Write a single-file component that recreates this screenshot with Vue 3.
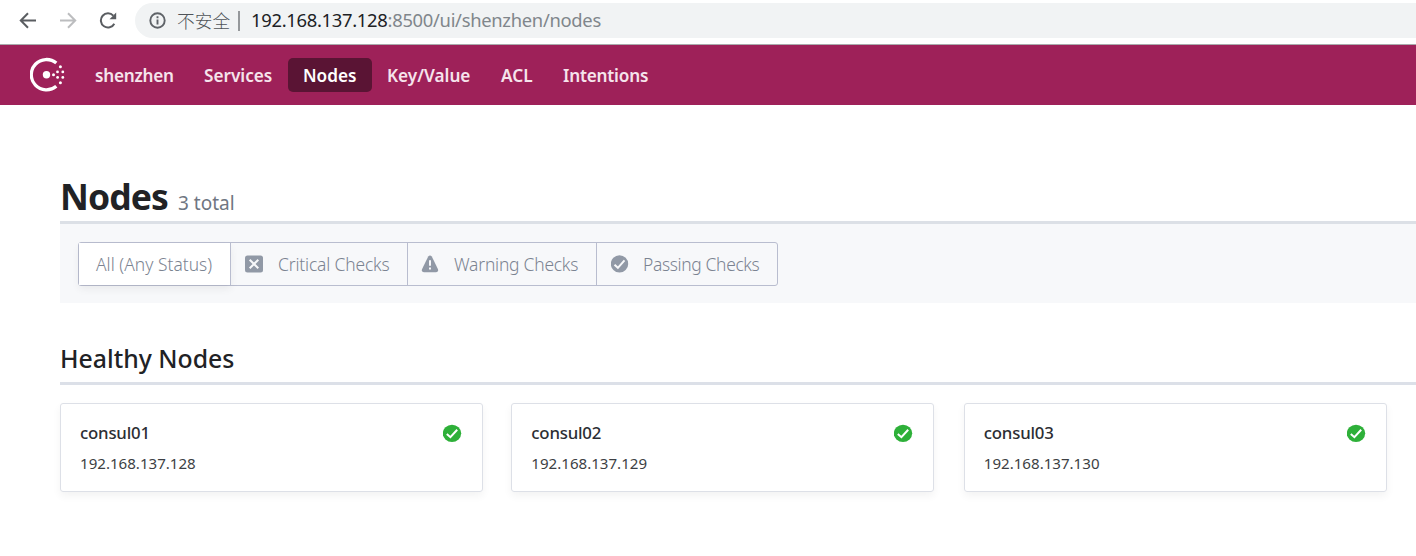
<script setup>
const tabs = [
  { label: 'shenzhen', key: 'dc' },
  { label: 'Services', key: 'services' },
  { label: 'Nodes', key: 'nodes' },
  { label: 'Key/Value', key: 'kv' },
  { label: 'ACL', key: 'acl' },
  { label: 'Intentions', key: 'intentions' },
]
const nodes = [
  { name: 'consul01', address: '192.168.137.128' },
  { name: 'consul02', address: '192.168.137.129' },
  { name: 'consul03', address: '192.168.137.130' },
]
</script>

<template>
  <div class="window">
    <div class="toolbar">
      <svg class="tool back" width="18" height="18" viewBox="0 0 18 18"><path d="M17 9.5H2.5M9 2.3 1.8 9.5 9 16.7" /></svg>
      <svg class="tool forward" width="18" height="18" viewBox="0 0 18 18"><path d="M1 9.5h14.5M9 2.3 16.2 9.5 9 16.7" /></svg>
      <svg class="tool reload" width="19" height="18" viewBox="0 0 19 18"><path d="M15.3 12.7A7.1 7.1 0 1 1 14.3 4.7" /><path class="solid" d="M17.2 1.5v6.7h-6.7z" /></svg>
      <div class="omnibox">
        <svg class="info" width="17" height="17" viewBox="0 0 17 17"><circle cx="8.5" cy="8.5" r="7.2" /><path d="M8.5 7.4v5M8.5 4.3v2" /></svg>
        <span class="insecure">不安全</span>
        <span class="divider"></span>
        <span class="url"><b>192.168.137.128</b><span>:8500/ui/shenzhen/nodes</span></span>
      </div>
    </div>
    <nav class="nav">
      <svg class="logo" width="36" height="36" viewBox="0 0 36 36">
        <path d="M26.3 6.1A15.2 15.2 0 1 0 26.3 29.3" />
        <circle cx="16.5" cy="17.7" r="3.7" />
        <circle cx="23.5" cy="17.7" r="1.5" />
        <circle cx="27.5" cy="14.9" r="1.4" /><circle cx="27.6" cy="20.4" r="1.4" />
        <circle cx="32.8" cy="14.9" r="1.4" /><circle cx="32.8" cy="20.4" r="1.4" />
        <circle cx="30.4" cy="9.7" r="1.5" /><circle cx="30.4" cy="25.7" r="1.5" />
      </svg>
      <a v-for="t in tabs" :key="t.key" class="tab" :class="[t.key, { active: t.key === 'nodes' }]">{{ t.label }}</a>
    </nav>
    <main>
      <header class="title"><h1>Nodes</h1><em>3 total</em></header>
      <div class="filter">
        <div class="group">
          <div class="option all"><span>All (Any Status)</span></div>
          <div class="option critical">
            <svg width="18" height="18" viewBox="0 0 18 18"><rect class="fill" y=".5" width="18" height="17" rx="2.5" /><path d="m4.7 4.7 8.6 8.6m0-8.6-8.6 8.6" /></svg>
            <span>Critical Checks</span>
          </div>
          <div class="option warning">
            <svg width="18" height="18" viewBox="0 0 18 18"><path class="fill" d="M7.2 1.5Q9-.6 10.8 1.5L17 14.2Q17.6 17.2 15 17.2H3Q.3 17.2 1 14.2z" /><path d="M9 5.2v5.6M9 12.4v2" /></svg>
            <span>Warning Checks</span>
          </div>
          <div class="option passing">
            <svg width="18" height="18" viewBox="0 0 18 18"><circle class="fill" cx="8.5" cy="8.9" r="8.7" /><path d="m3.5 9.7 3.4 3.1L13.5 5.4" /></svg>
            <span>Passing Checks</span>
          </div>
        </div>
      </div>
      <h2>Healthy Nodes</h2>
      <div class="cards">
        <article v-for="n in nodes" :key="n.name" class="card">
          <div class="row">
            <strong>{{ n.name }}</strong>
            <svg width="19" height="18" viewBox="0 0 19 18"><ellipse cx="9" cy="9.3" rx="9.2" ry="8.6" /><path d="m3.8 10 3.6 3.2 6.8-7.4" /></svg>
          </div>
          <p>{{ n.address }}</p>
        </article>
      </div>
    </main>
  </div>
</template>

<style>
body { background: #fff; }
</style>

<style scoped>
* { box-sizing: border-box; }
.window { width: 1416px; height: 556px; overflow: hidden; background: #fff; font-family: "Noto Sans", "Noto Sans CJK SC", sans-serif; color: #212225; white-space: nowrap; }
svg { flex: none; fill: none; }
.toolbar { height: 45px; display: flex; align-items: flex-start; border-bottom: 1px solid #a9aaac; padding: 3px 0 0 19px; }
.tool { margin-top: 8px; stroke: #5a5d61; stroke-width: 2; }
.forward { margin-left: 22px; stroke: #bcbdbf; }
.reload { margin-left: 22px; }
.solid { fill: #5a5d61; stroke: none; }
.omnibox { margin-left: 17px; flex: 1; height: 35px; border-radius: 18px 0 0 18px; background: #f1f3f4; display: flex; align-items: center; padding-left: 14px; }
.info { stroke: #5f6368; stroke-width: 1.9; }
.insecure { width: 60px; margin: -2px 0 0 11px; font: 300 17.7px/32px "Noto Sans CJK SC", sans-serif; color: #4f5358; }
.divider { width: 2px; height: 20px; background: #95989b; margin-left: 1px; }
.url { margin: -2px 0 0 11px; font-size: 18.4px; letter-spacing: -.3px; line-height: 34px; color: #80868b; }
.url b { font-weight: 400; color: #202124; }
.nav { height: 60px; background: #9e2159; display: flex; align-items: center; padding-left: 30px; }
.logo { margin-right: 14px; }
.logo path { stroke: #fff; stroke-width: 3.3; }
.logo circle { fill: #fff; }
.tab { height: 34px; padding-left: 15px; font-size: 17.2px; letter-spacing: -.02px; font-weight: 600; line-height: 36px; color: #f6e4ec; border-radius: 5px; }
.dc { width: 109px; letter-spacing: -.25px; }
.services { width: 99px; }
.nodes { width: 84px; }
.kv { width: 114px; }
.acl { width: 62px; }
.intentions { width: 116px; letter-spacing: -.2px; }
.active { background: #5a1434; color: #fff; }
main { padding: 63px 0 0 60px; }
.title { height: 56px; border-bottom: 3px solid #dce0e6; display: flex; align-items: baseline; }
h1 { margin: 0; font-size: 35.5px; font-weight: 700; line-height: 57px; width: 118px; letter-spacing: -.9px; }
em { font-style: normal; font-size: 19px; color: #6f7682; }
.filter { height: 79px; background: #f7f8fa; padding: 18px; }
.group { width: 700px; height: 44px; border: 1px solid #b9bdcf; border-radius: 3px; display: flex; }
.option { height: 42px; display: flex; align-items: center; font-size: 17.4px; font-weight: 350; color: #7b8391; border-right: 1px solid #b9bdcf; }
.option svg { margin-right: 15px; }
.option .fill { fill: #9199a6; stroke: none; }
.option path { stroke: #f7f8fa; stroke-width: 2; }
.all { width: 152px; padding-left: 17px; background: #fff; box-shadow: 0 4px 8px rgba(0, 0, 0, .06); letter-spacing: .03px; }
.critical { width: 177px; padding-left: 14px; letter-spacing: -.15px; }
.warning { width: 189px; padding-left: 13px; letter-spacing: -.2px; }
.passing { width: 180px; padding-left: 14px; border-right: 0; letter-spacing: -.33px; }
.passing svg { margin-right: 14px; }
h2 { margin: 0; height: 82px; padding-top: 37px; border-bottom: 3px solid #dce0e8; font-size: 24.8px; font-weight: 500; line-height: 36px; }
.cards { margin-top: 18px; width: 1327px; display: grid; grid-template-columns: repeat(3, 423px); column-gap: 28.9px; }
.card { height: 89px; border: 1px solid #dde0e7; border-radius: 3px; padding: 15px 20px 0 19px; box-shadow: 0 4px 8px rgba(0, 0, 0, .05); }
.card:nth-child(2) { margin: 0 .6px 0 -.6px; }
.row { height: 27px; display: flex; justify-content: space-between; align-items: center; font-size: 16.8px; letter-spacing: -.2px; }
.row strong { font-weight: 500; color: #2c2e33; }
.row ellipse { fill: #2eb039; }
.row path { stroke: #fff; stroke-width: 2; }
.card p { margin: 5px 0 0; font-size: 15.1px; line-height: 24px; color: #3d3f44; }
</style>
